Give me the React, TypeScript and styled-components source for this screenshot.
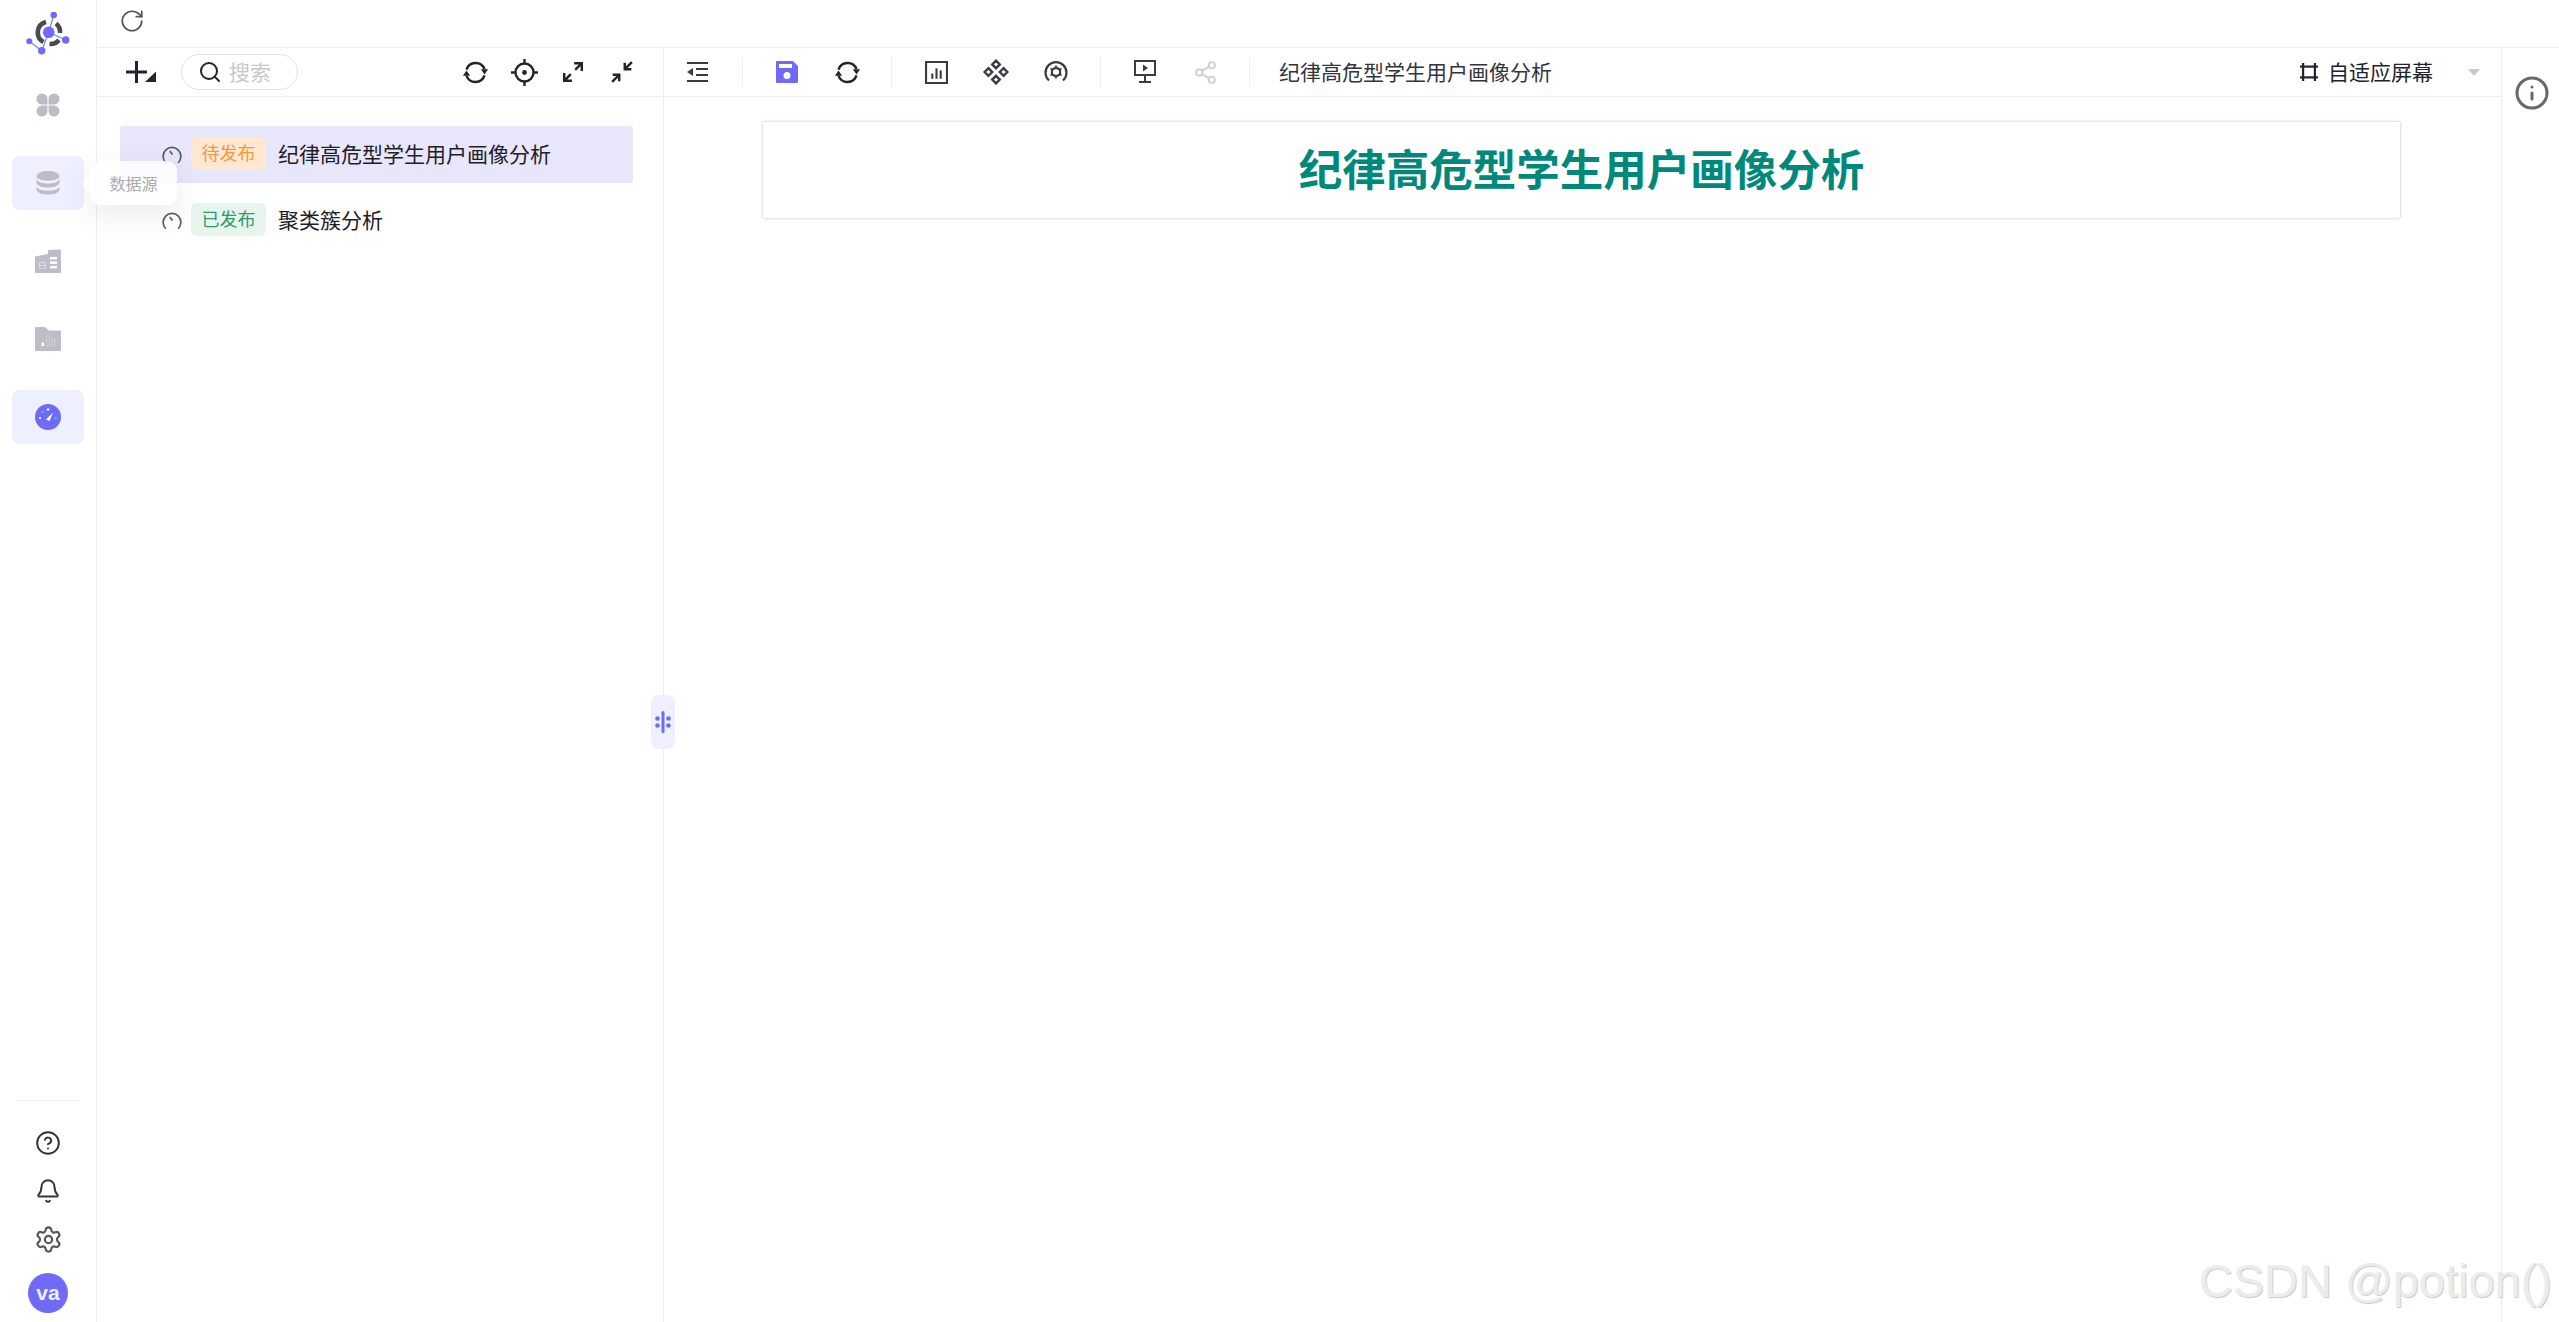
import React from 'react';
import styled, { createGlobalStyle } from 'styled-components';
import { Bell, CircleHelp, Info, RotateCw, Search, Settings, Share2 } from 'lucide-react';

const GlobalStyle = createGlobalStyle`
  html, body { margin: 0; padding: 0; background: #fff; }
  #root { height: 100vh; }
  * { box-sizing: border-box; }
  body { font-family: "Liberation Sans", "Noto Sans CJK SC", sans-serif; color: #222; }
`;

const LogoIcon = () => (
  <svg width="44" height="44" viewBox="26 12 44 44" fill="none">
    <g stroke="#7f7af7" strokeWidth="1.2">
      <path d="M48.7 32.3L53.7 15M48.7 32.3L65.7 40M48.7 32.3L41.7 50.7L29.3 41.3" />
    </g>
    <g stroke="#474a52" strokeWidth="4.6">
      <path d="M46 22A10.8 10.8 0 0 0 43.5 42" />
      <path d="M56 23.5A11 11 0 0 1 60 33" />
      <path d="M49.5 44A11.5 11.5 0 0 0 59 40" />
    </g>
    <g fill="#6f6af8">
      <circle cx="53.7" cy="15" r="3.3" />
      <circle cx="48.7" cy="32.3" r="5.8" />
      <circle cx="65.7" cy="40" r="3.7" />
      <circle cx="41.7" cy="50.7" r="3.7" />
      <circle cx="29.3" cy="41.3" r="3" />
    </g>
  </svg>
);

const CloverIcon = () => (
  <svg width="24" height="24" viewBox="0 0 24 24" fill="#bdbdc7">
    <path d="M6 .5a5.5 5.5 0 0 1 5.5 5.5v5.5H6A5.5 5.5 0 0 1 6 .5z" />
    <path d="M18 .5a5.5 5.5 0 0 0-5.5 5.5v5.5H18a5.5 5.5 0 0 0 0-11z" />
    <path d="M6 23.5A5.5 5.5 0 0 0 11.5 18v-5.5H6a5.5 5.5 0 0 0 0 11z" />
    <path d="M18 23.5a5.5 5.5 0 0 1-5.5-5.5v-5.5H18a5.5 5.5 0 0 1 0 11z" />
  </svg>
);

const DatabaseIcon = () => (
  <svg width="24" height="24" viewBox="0 0 24 24" fill="#bdbdc7">
    <ellipse cx="12" cy="5" rx="11.5" ry="5" />
    <path d="M.5 8c1 3 6 4.6 11.5 4.6S22.5 11 23.5 8v4c-1 3-6 4.6-11.5 4.6S1.5 15 .5 12z" />
    <path d="M.5 15.5c1 3 6 4.3 11.5 4.3s10.5-1.3 11.5-4.3V19c-1 3-6 4.6-11.5 4.6S1.5 22 .5 19z" />
  </svg>
);

const BuildingIcon = () => (
  <svg width="26" height="24" viewBox="0 0 26 24" fill="#bdbdc7">
    <path d="M0 7.5L13 5V1l12-.5a1 1 0 0 1 1 1V23a1 1 0 0 1-1 1H1a1 1 0 0 1-1-1z" />
    <g fill="#fff">
      <rect x="15" y="8" width="7" height="2.4" />
      <rect x="15" y="12.5" width="7" height="2.4" />
      <rect x="15" y="17" width="7" height="2.4" />
    </g>
    <path d="M4.5 13.5h6v6h-6zM4.5 16.5h6" fill="none" stroke="#dcdce2" strokeWidth="1" />
  </svg>
);

const FolderIcon = () => (
  <svg width="26" height="24" viewBox="0 0 26 24" fill="#bdbdc7">
    <path d="M0 1a1 1 0 0 1 1-1h9l4 3.5h11a1 1 0 0 1 1 1V23a1 1 0 0 1-1 1H1a1 1 0 0 1-1-1z" />
    <rect x="6.5" y="15.5" width="2.5" height="3.5" fill="#fff" />
    <path d="M11.5 9h3v10h-3zM17 12h3v7h-3z" fill="none" stroke="#cfcfd6" strokeWidth="1" />
  </svg>
);

const GaugeIcon = () => (
  <svg width="26" height="26" viewBox="0 0 26 26">
    <circle cx="13" cy="13" r="13" fill="#6f6af8" />
    <path d="M11 15.5L18 8.5L14.5 17z" fill="#fff" />
    <circle cx="7.5" cy="8" r="1.3" fill="#34d0c8" />
    <circle cx="13" cy="5.5" r="1.2" fill="#fff" />
    <circle cx="5" cy="14" r="1.1" fill="#fff" />
    <circle cx="20.5" cy="14" r="1.2" fill="#34d0c8" />
  </svg>
);

const PlusDropIcon = () => (
  <svg width="30" height="22" viewBox="0 0 30 22" fill="#22242c">
    <path d="M0 9.5h9V0h3v9.5h9v3h-9V22H9v-9.5H0z" />
    <path d="M19 21L30 10.5V21z" />
  </svg>
);

const SyncIcon = () => (
  <svg width="27" height="27" viewBox="0 0 24 24" fill="#22242c">
    <path d="M4 9.5A8.5 8.5 0 0 1 20 9M20 14.5A8.5 8.5 0 0 1 4 15" fill="none" stroke="#22242c" strokeWidth="2.2" />
    <path d="M16.8 9.2h6.4l-3.2 4.6zM.8 14.8h6.4L4 10.2z" />
  </svg>
);

const TargetIcon = () => (
  <svg width="27" height="27" viewBox="0 0 27 27" fill="none" stroke="#22242c" strokeWidth="2.4">
    <circle cx="13.5" cy="13.5" r="9" />
    <path d="M13.5 0v5M13.5 22v5M0 13.5h5M22 13.5h5" />
    <circle cx="13.5" cy="13.5" r="2.4" fill="#22242c" stroke="none" />
  </svg>
);

const ExpandIcon = () => (
  <svg width="22" height="22" viewBox="0 0 20 20" fill="none" stroke="#22242c" strokeWidth="2.2">
    <path d="M2 18l6-6M2 11v7h7M18 2l-6 6M11 2h7v7" />
  </svg>
);

const CompressIcon = () => (
  <svg width="22" height="22" viewBox="0 0 20 20" fill="none" stroke="#22242c" strokeWidth="2.2">
    <path d="M19 1l-6 6M12.5 1.5V7.5h6M1 19l6-6M1.5 12.5h6v6" />
  </svg>
);

const IndentIcon = () => (
  <svg width="22" height="20" viewBox="0 0 22 20" fill="#3a3c44">
    <rect x="0" y="0" width="21" height="2" />
    <rect x="9" y="6" width="12" height="2" />
    <rect x="9" y="12" width="12" height="2" />
    <rect x="0" y="18" width="21" height="2" />
    <path d="M6 6v8L0 10z" />
  </svg>
);

const SaveIcon = () => (
  <svg width="22" height="22" viewBox="0 0 22 22">
    <path d="M1 0h16l5 5v16a1 1 0 0 1-1 1H1a1 1 0 0 1-1-1V1a1 1 0 0 1 1-1z" fill="#6f6af8" />
    <rect x="3" y="3" width="13" height="4" fill="#fff" />
    <circle cx="11" cy="14.5" r="3.5" fill="#fff" />
  </svg>
);

const ChartIcon = () => (
  <svg width="23" height="23" viewBox="0 0 22 22" fill="#3a3c44">
    <path d="M0 0h22v22H0zM2 2v18h18V2z" fillRule="evenodd" />
    <rect x="6" y="12" width="2" height="5" />
    <rect x="10" y="7" width="2" height="10" />
    <rect x="14" y="9" width="2" height="8" />
  </svg>
);

const DiamondsIcon = () => (
  <svg width="26" height="26" viewBox="0 0 24 24" fill="none" stroke="#3a3c44" strokeWidth="2.2">
    <path d="M12 1.5l3.5 3.5-3.5 3.5L8.5 5zM12 15.500l3.500 3.500-3.500 3.500L8.500 19zM5 8.500L8.500 12 5 15.500 1.500 12zM19 8.500l3.500 3.500-3.500 3.500-3.500-3.500z" />
  </svg>
);

// arc open at the bottom with a small gear in it
const GaugeGearIcon = () => (
  <svg width="24" height="24" viewBox="0 0 24 24" fill="none" stroke="#3a3c44" strokeWidth="2.2">
    <path d="M5 20.5A10.5 10.5 0 1 1 19 20.5" />
    <path d="M12 7.5l4 2.2v4.600L12 16.500l-4-2.200V9.700z" />
    <path d="M12 5.500v2M12 16.500v2M6.500 8.500l1.500 1.200M17.500 8.500L16 9.700M6.500 15.500L8 14.300M17.500 15.500L16 14.300" strokeWidth="1.600" />
  </svg>
);

const PresentIcon = () => (
  <svg width="22" height="24" viewBox="0 0 22 24" fill="#3a3c44">
    <path d="M0 0h22v16H0zM2 2v12h18V2z" fillRule="evenodd" />
    <path d="M9 4.5l5 3.5-5 3.5z" />
    <rect x="10" y="15" width="2" height="7" />
    <rect x="5" y="21" width="12" height="2" />
  </svg>
);

const FitIcon = () => (
  <svg width="18" height="18" viewBox="0 0 18 18" fill="#22242c">
    <rect x="2" y="0" width="2.2" height="18" />
    <rect x="13.8" y="0" width="2.2" height="18" />
    <rect x="0" y="2.5" width="18" height="2.2" />
    <rect x="0" y="13.3" width="18" height="2.2" />
  </svg>
);

const DialIcon = () => (
  <svg width="20" height="20" viewBox="0 0 18 18" fill="none" stroke="#5a5c64" strokeWidth="1.5">
    <path d="M3.5 16A8 8 0 1 1 14.500 16" />
    <path d="M7 5.500L9.500 8.500" />
  </svg>
);

const GripIcon = () => (
  <svg width="16" height="22" viewBox="0 0 16 22" fill="#6f6af8">
    <rect x="6.5" y="0" width="3" height="22" rx="1.5" />
    <circle cx="2.5" cy="7.5" r="2.3" />
    <circle cx="13.5" cy="7.5" r="2.3" />
    <circle cx="2.5" cy="14.5" r="2.3" />
    <circle cx="13.5" cy="14.5" r="2.3" />
  </svg>
);

const navItems = [
  { key: 'home', icon: <CloverIcon /> },
  { key: 'data', icon: <DatabaseIcon />, active: true, tip: '数据源' },
  { key: 'model', icon: <BuildingIcon /> },
  { key: 'chart', icon: <FolderIcon /> },
  { key: 'board', icon: <GaugeIcon />, active: true },
];

const reports = [
  { name: '纪律高危型学生用户画像分析', status: '待发布', tone: 'pending', selected: true },
  { name: '聚类簇分析', status: '已发布', tone: 'published', selected: false },
];

const App = () => {
  return (
    <>
      <GlobalStyle />
      <Page>
        <Sidebar>
          <LogoBox>
            <LogoIcon />
          </LogoBox>
          <NavList>
            {navItems.map((item) => (
              <NavItem key={item.key} $active={item.active}>
                {item.icon}
                {item.tip && <Tooltip>{item.tip}</Tooltip>}
              </NavItem>
            ))}
          </NavList>
          <SideFooter>
            <SideDivider />
            <FooterIcon><CircleHelp size={26} strokeWidth={1.8} color="#33353c" /></FooterIcon>
            <FooterIcon><Bell size={26} strokeWidth={1.8} color="#33353c" /></FooterIcon>
            <FooterIcon><Settings size={29} strokeWidth={1.8} color="#55575e" /></FooterIcon>
            <Avatar>va</Avatar>
          </SideFooter>
        </Sidebar>

        <Main>
          <TopBar>
            <RotateCw size={26} strokeWidth={1.6} color="#55575e" />
          </TopBar>
          <Workspace>
            <TreePanel>
              <PanelToolbar>
                <PlusDropIcon />
                <SearchPill>
                  <Search size={24} strokeWidth={2} color="#22242c" />
                  <SearchText>搜索</SearchText>
                </SearchPill>
                <PanelActions>
                  <ToolButton><SyncIcon /></ToolButton>
                  <ToolButton><TargetIcon /></ToolButton>
                  <ToolButton><ExpandIcon /></ToolButton>
                  <ToolButton><CompressIcon /></ToolButton>
                </PanelActions>
              </PanelToolbar>
              <TreeList>
                {reports.map((r) => (
                  <TreeRow key={r.name} $selected={r.selected}>
                    <DialIcon />
                    <StatusTag $tone={r.tone}>{r.status}</StatusTag>
                    <RowName>{r.name}</RowName>
                  </TreeRow>
                ))}
              </TreeList>
              <DragHandle>
                <GripIcon />
              </DragHandle>
            </TreePanel>

            <Editor>
              <EditorToolbar>
                <ToolButton><IndentIcon /></ToolButton>
                <ToolDivider />
                <ToolGroup>
                  <ToolButton><SaveIcon /></ToolButton>
                  <ToolButton><SyncIcon /></ToolButton>
                </ToolGroup>
                <ToolDivider />
                <ToolGroup>
                  <ToolButton><ChartIcon /></ToolButton>
                  <ToolButton><DiamondsIcon /></ToolButton>
                  <ToolButton><GaugeGearIcon /></ToolButton>
                </ToolGroup>
                <ToolDivider />
                <ToolGroup>
                  <ToolButton><PresentIcon /></ToolButton>
                  <ToolButton><Share2 size={25} strokeWidth={1.8} color="#cfcfcf" /></ToolButton>
                </ToolGroup>
                <ToolDivider />
                <DocTitle>纪律高危型学生用户画像分析</DocTitle>
                <FitSelect>
                  <FitIcon />
                  <FitLabel>自适应屏幕</FitLabel>
                  <Caret />
                </FitSelect>
              </EditorToolbar>
              <Canvas>
                <TitleCard>纪律高危型学生用户画像分析</TitleCard>
              </Canvas>
            </Editor>

            <InfoRail>
              <Info size={36} strokeWidth={2} color="#66686f" />
            </InfoRail>
          </Workspace>
        </Main>
        <Watermark>CSDN @potion()</Watermark>
      </Page>
    </>
  );
};

export default App;

const Page = styled.div`
  position: relative;
  display: flex;
  width: 100%;
  height: 100vh;
  overflow: hidden;
  font-family: "Liberation Sans", "Noto Sans CJK SC", sans-serif;
  background: #fff;
`;

const Sidebar = styled.aside`
  position: relative;
  z-index: 3;
  display: flex;
  flex-direction: column;
  flex: 0 0 97px;
  border-right: 1px solid #eeeeef;
  background: #fff;
`;

const LogoBox = styled.div`
  display: flex;
  justify-content: center;
  height: 78px;
  padding-top: 12px;
`;

const NavList = styled.nav`
  display: flex;
  flex-direction: column;
  gap: 24px;
  padding: 0 12px;
`;

const NavItem = styled.div<{ $active?: boolean }>`
  position: relative;
  display: flex;
  align-items: center;
  justify-content: center;
  height: 54px;
  border-radius: 8px;
  background: ${(p) => (p.$active ? '#eef0ff' : 'transparent')};
`;

const Tooltip = styled.div`
  position: absolute;
  left: 78px;
  top: 5px;
  display: flex;
  align-items: center;
  justify-content: center;
  width: 87px;
  height: 44px;
  border-radius: 10px;
  font-size: 16px;
  color: #aaa;
  background: rgba(255, 255, 255, 0.8);
  box-shadow: 0 10px 30px rgba(60, 60, 90, 0.1);

  &::before {
    content: "";
    position: absolute;
    left: -6px;
    top: 17px;
    width: 12px;
    height: 12px;
    transform: rotate(45deg);
    background: rgba(255, 255, 255, 0.8);
  }
`;

const SideFooter = styled.div`
  display: flex;
  flex-direction: column;
  align-items: center;
  margin-top: auto;
  padding-bottom: 9px;
`;

const SideDivider = styled.div`
  width: 60px;
  height: 1px;
  margin-bottom: 18px;
  background: #eeeeef;
`;

const FooterIcon = styled.div`
  display: flex;
  align-items: center;
  justify-content: center;
  height: 48px;
`;

const Avatar = styled.div`
  display: flex;
  align-items: center;
  justify-content: center;
  width: 40px;
  height: 40px;
  margin-top: 10px;
  border-radius: 50%;
  font-size: 21px;
  font-weight: 700;
  color: #f0efff;
  background: #6f6af8;
`;

const Main = styled.main`
  display: flex;
  flex-direction: column;
  flex: 1;
  min-width: 0;
`;

const TopBar = styled.div`
  display: flex;
  align-items: center;
  flex: 0 0 48px;
  padding: 0 0 6px 22px;
  border-bottom: 1px solid #eeeeef;
`;

const Workspace = styled.div`
  display: flex;
  flex: 1;
  min-height: 0;
`;

const TreePanel = styled.section`
  position: relative;
  z-index: 2;
  flex: 0 0 567px;
  border-right: 1px solid #eeeeef;
`;

const PanelToolbar = styled.div`
  display: flex;
  align-items: center;
  height: 49px;
  padding: 0 26px 0 29px;
  border-bottom: 1px solid #eeeeef;
`;

const SearchPill = styled.div`
  display: flex;
  align-items: center;
  gap: 7px;
  width: 117px;
  height: 36px;
  margin-left: 25px;
  padding-left: 16px;
  border: 1px solid #e2e2e4;
  border-radius: 18px;
`;

const SearchText = styled.span`
  padding-bottom: 2px;
  font-size: 21px;
  color: #c8c8c8;
`;

const PanelActions = styled.div`
  display: flex;
  gap: 19px;
  margin-left: auto;
`;

const ToolButton = styled.div`
  display: flex;
  align-items: center;
  justify-content: center;
  width: 30px;
  height: 30px;
`;

const TreeList = styled.div`
  display: flex;
  flex-direction: column;
  gap: 9px;
  padding: 29px 30px 0 23px;
`;

const TreeRow = styled.div<{ $selected?: boolean }>`
  display: flex;
  align-items: center;
  height: 57px;
  padding-left: 42px;
  border-radius: 3px;
  background: ${(p) => (p.$selected ? '#e8e6fb' : 'transparent')};
`;

const StatusTag = styled.span<{ $tone: string }>`
  display: flex;
  align-items: center;
  justify-content: center;
  width: 75px;
  height: 33px;
  margin: 0 12px 3px 9px;
  padding-bottom: 2px;
  border-radius: 6px;
  font-size: 18px;
  color: ${(p) => (p.$tone === 'pending' ? '#ee9944' : '#2f9a6b')};
  background: ${(p) => (p.$tone === 'pending' ? '#ffe8d1' : '#e7f5ee')};
`;

const RowName = styled.span`
  padding-bottom: 3px;
  font-size: 21px;
  color: #1f2026;
`;

const DragHandle = styled.div`
  position: absolute;
  right: -12px;
  top: 647px;
  display: flex;
  align-items: center;
  justify-content: center;
  width: 24px;
  height: 54px;
  border-radius: 8px;
  background: #eef0ff;
`;

const Editor = styled.section`
  display: flex;
  flex-direction: column;
  flex: 1;
  min-width: 0;
`;

const EditorToolbar = styled.div`
  display: flex;
  align-items: center;
  height: 49px;
  padding: 0 21px 0 19px;
  border-bottom: 1px solid #eeeeef;
`;

const ToolGroup = styled.div`
  display: flex;
  gap: 30px;
`;

const ToolDivider = styled.div`
  width: 1px;
  height: 30px;
  margin: 0 29px;
  background: #eeeeef;
`;

const DocTitle = styled.span`
  padding-bottom: 2px;
  font-size: 21px;
  color: #33353c;
`;

const FitSelect = styled.div`
  display: flex;
  align-items: center;
  margin-left: auto;
`;

const FitLabel = styled.span`
  margin: 0 35px 0 10px;
  padding-bottom: 2px;
  font-size: 21px;
  color: #22242c;
`;

const Caret = styled.span`
  width: 0;
  height: 0;
  border-left: 6px solid transparent;
  border-right: 6px solid transparent;
  border-top: 7px solid #c8c8c8;
`;

const Canvas = styled.div`
  flex: 1;
  padding: 24px 100px 0 98px;
`;

const TitleCard = styled.div`
  display: flex;
  align-items: center;
  justify-content: center;
  height: 98px;
  padding-bottom: 5px;
  border: 1px solid #e6e6e6;
  border-radius: 2px;
  box-shadow: 0 0 3px rgba(0, 0, 0, 0.1);
  font-size: 43.5px;
  font-weight: 700;
  color: #00897b;
`;

const InfoRail = styled.aside`
  display: flex;
  justify-content: center;
  flex: 0 0 58px;
  padding: 27px 0 0 2px;
  border-left: 1px solid #eeeeef;
`;

const Watermark = styled.div`
  position: absolute;
  right: 7px;
  bottom: 14px;
  font-family: "Liberation Sans", sans-serif;
  font-size: 47px;
  line-height: 54px;
  color: #ececec;
  text-shadow: 1px 1px 1px #c9c9c9;
  pointer-events: none;
`;
